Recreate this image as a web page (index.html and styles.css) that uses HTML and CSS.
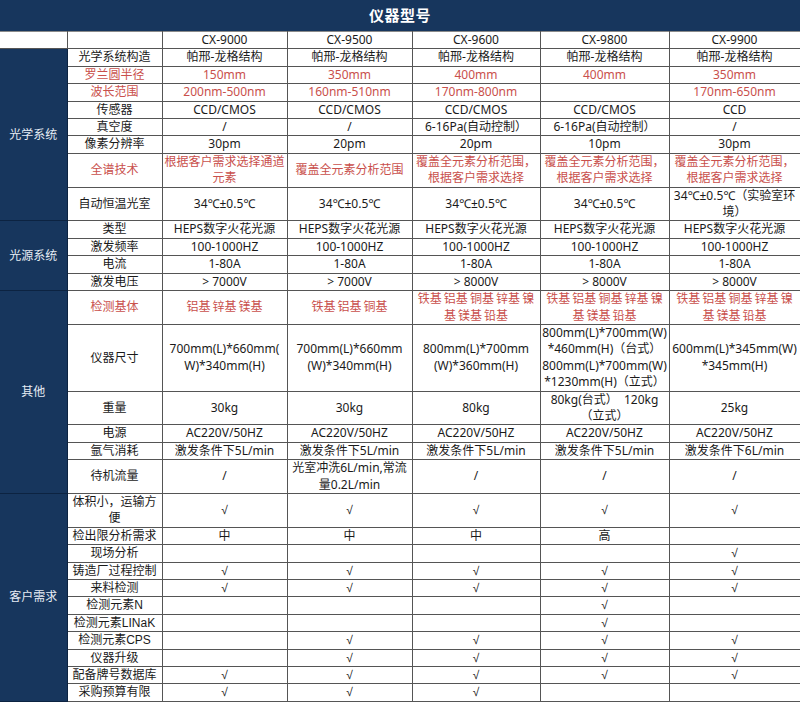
FILE: index.html
```html
<!DOCTYPE html>
<html lang="zh">
<head>
<meta charset="utf-8">
<title>仪器型号</title>
<link rel="stylesheet" href="styles.css">
</head>
<body>
<div class="page">
  <div class="title">仪器型号</div>
  <table class="spec">
    <colgroup>
      <col class="c-grp"><col class="c-lbl"><col class="c-a"><col class="c-b"><col class="c-c"><col class="c-d"><col class="c-e">
    </colgroup>
    <tbody>
      <tr class="models">
        <td class="blank"></td><td></td><td>CX-9000</td><td>CX-9500</td><td>CX-9600</td><td>CX-9800</td><td>CX-9900</td>
      </tr>
      <tr>
        <td class="grp" rowspan="8">光学系统</td>
        <td>光学系统构造</td><td>帕邢-龙格结构</td><td>帕邢-龙格结构</td><td>帕邢-龙格结构</td><td>帕邢-龙格结构</td><td>帕邢-龙格结构</td>
      </tr>
      <tr class="red">
        <td>罗兰圆半径</td><td>150mm</td><td>350mm</td><td>400mm</td><td>400mm</td><td>350mm</td>
      </tr>
      <tr class="red">
        <td>波长范围</td><td>200nm-500nm</td><td>160nm-510nm</td><td>170nm-800nm</td><td></td><td>170nm-650nm</td>
      </tr>
      <tr>
        <td>传感器</td><td>CCD/CMOS</td><td>CCD/CMOS</td><td>CCD/CMOS</td><td>CCD/CMOS</td><td>CCD</td>
      </tr>
      <tr>
        <td>真空度</td><td>/</td><td>/</td><td>6-16Pa(自动控制）</td><td>6-16Pa(自动控制）</td><td>/</td>
      </tr>
      <tr>
        <td>像素分辨率</td><td>30pm</td><td>20pm</td><td>20pm</td><td>10pm</td><td>30pm</td>
      </tr>
      <tr class="red">
        <td>全谱技术</td><td>根据客户需求选择通道<br>元素</td><td>覆盖全元素分析范围</td><td>覆盖全元素分析范围，<br>根据客户需求选择</td><td>覆盖全元素分析范围，<br>根据客户需求选择</td><td>覆盖全元素分析范围，<br>根据客户需求选择</td>
      </tr>
      <tr>
        <td>自动恒温光室</td><td>34℃±0.5℃</td><td>34℃±0.5℃</td><td>34℃±0.5℃</td><td>34℃±0.5℃</td><td>34℃±0.5℃（实验室环<br>境）</td>
      </tr>
      <tr>
        <td class="grp" rowspan="4">光源系统</td>
        <td>类型</td><td>HEPS数字火花光源</td><td>HEPS数字火花光源</td><td>HEPS数字火花光源</td><td>HEPS数字火花光源</td><td>HEPS数字火花光源</td>
      </tr>
      <tr>
        <td>激发频率</td><td>100-1000HZ</td><td>100-1000HZ</td><td>100-1000HZ</td><td>100-1000HZ</td><td>100-1000HZ</td>
      </tr>
      <tr>
        <td>电流</td><td>1-80A</td><td>1-80A</td><td>1-80A</td><td>1-80A</td><td>1-80A</td>
      </tr>
      <tr>
        <td>激发电压</td><td>&gt; 7000V</td><td>&gt; 7000V</td><td>&gt; 8000V</td><td>&gt; 8000V</td><td>&gt; 8000V</td>
      </tr>
      <tr class="red base">
        <td class="grp" rowspan="6">其他</td>
        <td>检测基体</td><td>铝基 锌基 镁基</td><td>铁基 铝基 铜基</td><td>铁基 铝基 铜基 锌基 镍<br>基 镁基 铅基</td><td>铁基 铝基 铜基 锌基 镍<br>基 镁基 铅基</td><td>铁基 铝基 铜基 锌基 镍<br>基 镁基 铅基</td>
      </tr>
      <tr>
        <td>仪器尺寸</td><td>700mm(L)*660mm(<br>W)*340mm(H)</td><td>700mm(L)*660mm<br>(W)*340mm(H)</td><td>800mm(L)*700mm<br>(W)*360mm(H)</td><td>800mm(L)*700mm(W)<br>*460mm(H)（台式）<br>800mm(L)*700mm(W)<br>*1230mm(H)（立式）</td><td>600mm(L)*345mm(W)<br>*345mm(H)</td>
      </tr>
      <tr>
        <td>重量</td><td>30kg</td><td>30kg</td><td>80kg</td><td>80kg(台式）&nbsp;&nbsp;120kg<br>（立式）</td><td>25kg</td>
      </tr>
      <tr>
        <td>电源</td><td>AC220V/50HZ</td><td>AC220V/50HZ</td><td>AC220V/50HZ</td><td>AC220V/50HZ</td><td>AC220V/50HZ</td>
      </tr>
      <tr>
        <td>氩气消耗</td><td>激发条件下5L/min</td><td>激发条件下5L/min</td><td>激发条件下5L/min</td><td>激发条件下5L/min</td><td>激发条件下6L/min</td>
      </tr>
      <tr>
        <td>待机流量</td><td>/</td><td>光室冲洗6L/min,常流<br>量0.2L/min</td><td>/</td><td>/</td><td>/</td>
      </tr>
      <tr class="checks">
        <td class="grp" rowspan="11">客户需求</td>
        <td>体积小，运输方<br>便</td><td>√</td><td>√</td><td>√</td><td>√</td><td>√</td>
      </tr>
      <tr class="checks">
        <td>检出限分析需求</td><td>中</td><td>中</td><td>中</td><td>高</td><td></td>
      </tr>
      <tr class="checks">
        <td>现场分析</td><td></td><td></td><td></td><td></td><td>√</td>
      </tr>
      <tr class="checks">
        <td>铸造厂过程控制</td><td>√</td><td>√</td><td>√</td><td>√</td><td>√</td>
      </tr>
      <tr class="checks">
        <td>来料检测</td><td>√</td><td>√</td><td>√</td><td>√</td><td>√</td>
      </tr>
      <tr class="checks">
        <td>检测元素N</td><td></td><td></td><td></td><td>√</td><td></td>
      </tr>
      <tr class="checks">
        <td>检测元素LINaK</td><td></td><td></td><td></td><td>√</td><td></td>
      </tr>
      <tr class="checks">
        <td>检测元素CPS</td><td></td><td>√</td><td>√</td><td>√</td><td>√</td>
      </tr>
      <tr class="checks">
        <td>仪器升级</td><td></td><td>√</td><td>√</td><td>√</td><td>√</td>
      </tr>
      <tr class="checks">
        <td>配备牌号数据库</td><td>√</td><td>√</td><td>√</td><td>√</td><td>√</td>
      </tr>
      <tr class="checks">
        <td>采购预算有限</td><td>√</td><td>√</td><td>√</td><td></td><td></td>
      </tr>
    </tbody>
  </table>
</div>
</body>
</html>
```
FILE: styles.css
```css
html, body {
  margin: 0;
  padding: 0;
  background: #ffffff;
}

.page {
  width: 800px;
  height: 702px;
  overflow: hidden;
  font-family: "Noto Sans", "Noto Sans CJK SC", sans-serif;
  font-size: 12px;
  color: #1a1a1a;
}

.title {
  height: 31px;
  background: #17365d;
  color: #ffffff;
  font-size: 15px;
  font-weight: bold;
  line-height: 31px;
  text-align: center;
  letter-spacing: 0.5px;
}

.spec {
  width: 800px;
  border-collapse: collapse;
  table-layout: fixed;
}

.c-grp { width: 67px; }
.c-lbl { width: 95px; }
.c-a { width: 125px; }
.c-b { width: 125px; }
.c-c { width: 128px; }
.c-d { width: 129px; }
.c-e { width: 131px; }

.spec td {
  border: 1px solid #555555;
  padding: 0;
  line-height: 16.4px;
  text-align: center;
  vertical-align: middle;
  white-space: nowrap;
  overflow: hidden;
}

.spec tr:first-child td {
  border-top-color: #8a8a8a;
}

.spec .red td {
  color: #c9504c;
}

.spec .base td {
  word-spacing: -1px;
}

.spec .checks td {
  font-family: "Liberation Sans", "Noto Sans CJK SC", sans-serif;
}

.spec td.grp {
  background: #17365d;
  color: #e6ecf4;
  font-family: "Noto Sans", "Noto Sans CJK SC", sans-serif;
  border-color: #0c2341;
  border-left: 0;
}

.spec .red td.grp {
  color: #e6ecf4;
}

.spec td.blank {
  border-left: 0;
}
```
